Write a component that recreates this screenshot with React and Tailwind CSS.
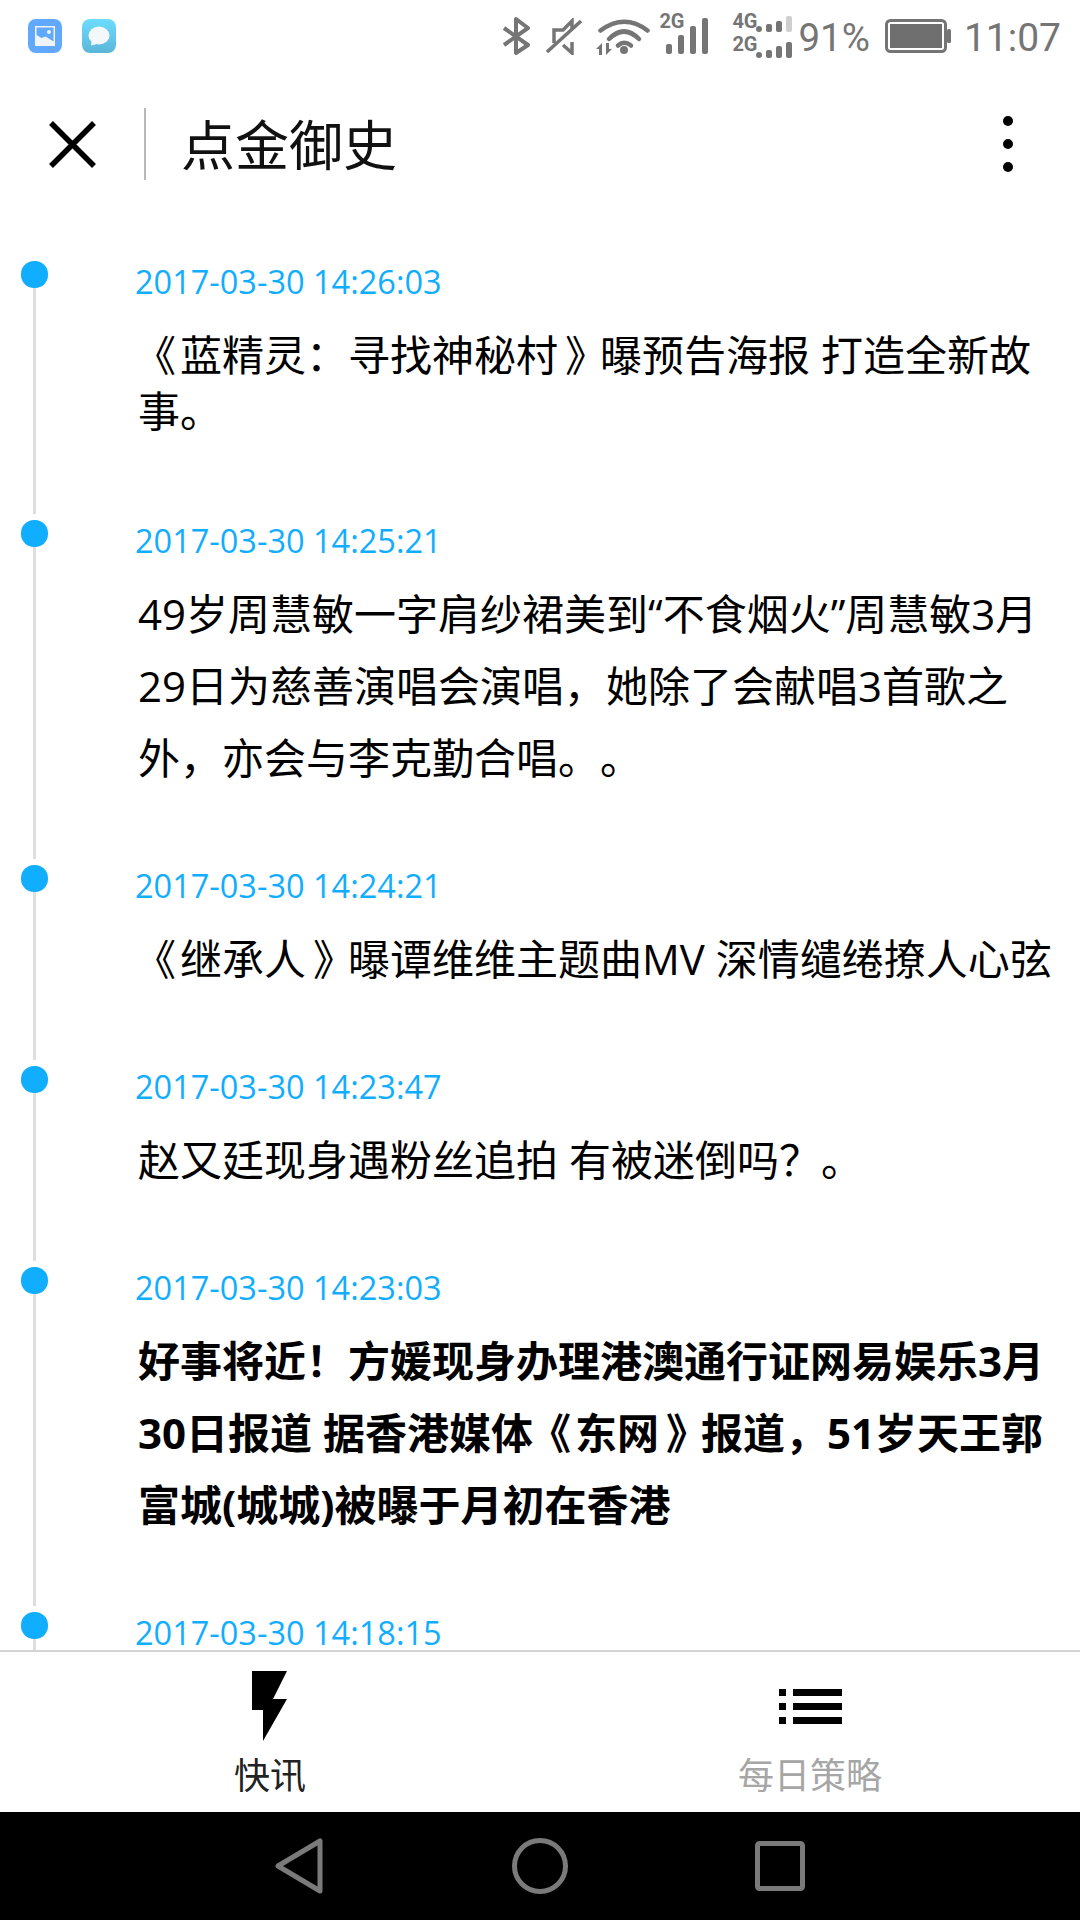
import React from 'react';

const news = [
  {
    time: '2017-03-30 14:26:03',
    text: '《蓝精灵：寻找神秘村》曝预告海报 打造全新故事。',
    body: 'mt-[25px] leading-[56px]',
    pad: 'pb-[81px]',
  },
  {
    time: '2017-03-30 14:25:21',
    text: '49岁周慧敏一字肩纱裙美到“不食烟火”周慧敏3月29日为慈善演唱会演唱，她除了会献唱3首歌之外，亦会与李克勤合唱。。',
    body: 'mt-[17px] leading-[72px]',
    pad: 'pb-[71px]',
  },
  {
    time: '2017-03-30 14:24:21',
    text: '《继承人》曝谭维维主题曲MV 深情缱绻撩人心弦',
    body: 'mt-[17px] leading-[72px]',
    pad: 'pb-[71px]',
  },
  {
    time: '2017-03-30 14:23:47',
    text: '赵又廷现身遇粉丝追拍 有被迷倒吗？。',
    body: 'mt-[17px] leading-[72px]',
    pad: 'pb-[71px]',
  },
  {
    time: '2017-03-30 14:23:03',
    text: '好事将近！方媛现身办理港澳通行证网易娱乐3月30日报道 据香港媒体《东网》报道，51岁天王郭富城(城城)被曝于月初在香港',
    body: 'mt-[17px] leading-[72px] font-bold',
    pad: 'pb-[71px]',
  },
  {
    time: '2017-03-30 14:18:15',
    text: '',
    body: '',
    pad: 'pb-[71px]',
  },
];

// 书名号 sit centred in their box in the screenshot, nudge them there
const withBrackets = (text) =>
  text.split(/([《》])/).map((part, i) => {
    if (part === '《') return <span key={i} className="relative -left-[4px]">{part}</span>;
    if (part === '》') return <span key={i} className="relative left-[7px]">{part}</span>;
    return part;
  });

const StatusBar = () => (
  <div className="flex h-[72px] shrink-0 items-center justify-between pl-[28px] pr-[19px] text-[#757575]">
    <div className="flex items-center gap-[20px]">
      <svg width="34" height="34" viewBox="0 0 34 34">
        <rect width="34" height="34" rx="8" fill="#60a9ff" />
        <rect x="7" y="7" width="20" height="20" fill="#f0f4f8" />
        <path d="M8.5 8.5h17v14l-8-5-4 1.5-5-3z" fill="#60a9ff" />
        <circle cx="21" cy="13" r="2" fill="#f0f4f8" />
      </svg>
      <svg width="34" height="34" viewBox="0 0 34 34">
        <defs>
          <linearGradient id="msg" x1="0" y1="0" x2="0" y2="1">
            <stop offset="0" stopColor="#6cdcff" />
            <stop offset="1" stopColor="#5bb6d8" />
          </linearGradient>
        </defs>
        <rect width="34" height="34" rx="8" fill="url(#msg)" />
        <ellipse cx="17" cy="16.5" rx="10.5" ry="9" fill="#f5f8fa" />
        <path d="M10 20l-1 6.500 8-2z" fill="#f5f8fa" />
      </svg>
    </div>
    <div className="flex items-center font-['Roboto',sans-serif]">
      <svg width="28" height="38" viewBox="0 0 28 38" fill="none" stroke="#757575" strokeWidth="4" strokeLinejoin="round">
        <path d="M2 11l24 17-12 8V2l12 9L2 28" />
      </svg>
      <svg className="ml-[16px]" width="36" height="37" viewBox="0 0 36 37" fill="none" stroke="#757575" strokeWidth="3.5">
        <path d="M1 34L35 3" />
        <path d="M8 25V12h9l9-9v8M26 24v11l-9-8" />
      </svg>
      <svg className="ml-[14px]" width="54" height="37" viewBox="0 0 54 37" fill="none" stroke="#757575" strokeWidth="4.5" strokeLinecap="round">
        <path d="M4.500 12.500Q28.500 -5 51.500 12.500" />
        <path d="M13 21Q28 6 43 21" />
        <path d="M22 27.500Q28 22 35 27.500" />
        <circle cx="28" cy="32" r="4" fill="#757575" stroke="none" />
        <path d="M6 25v12H3v-6H0zM10 37V25h3v6h3z" fill="#757575" stroke="none" />
      </svg>
      <div className="relative ml-[9px] h-[42px] w-[49px]">
        <span className="absolute left-0 top-[-4px] text-[20px] font-bold leading-[20px]">2G</span>
        <div className="absolute bottom-[3px] right-0 flex items-end gap-[6px]">
          <div className="h-[10px] w-[6px] rounded-[2px] bg-[#757575]" />
          <div className="h-[19px] w-[6px] rounded-[2px] bg-[#757575]" />
          <div className="h-[28px] w-[6px] rounded-[2px] bg-[#757575]" />
          <div className="h-[36px] w-[6px] rounded-[2px] bg-[#757575]" />
        </div>
      </div>
      <div className="relative ml-[24px] h-[46px] w-[60px] text-[20px] font-bold leading-[18px]">
        <span className="absolute left-0 top-[-1px]">4G</span>
        <span className="absolute left-0 top-[22px]">2G</span>
        <div className="absolute right-0 top-[3px] flex items-end gap-[4px]">
          <div className="h-[6px] w-[6px] rounded-full bg-[#757575]" />
          <div className="h-[8px] w-[6px] rounded-[2px] bg-[#757575]" />
          <div className="h-[11px] w-[6px] rounded-[2px] bg-[#757575]" />
          <div className="h-[16px] w-[6px] rounded-[2px] bg-[#cfcfcf]" />
        </div>
        <div className="absolute bottom-[1px] right-0 flex items-end gap-[4px]">
          <div className="h-[6px] w-[6px] rounded-full bg-[#757575]" />
          <div className="h-[8px] w-[6px] rounded-[2px] bg-[#757575]" />
          <div className="h-[12px] w-[6px] rounded-[2px] bg-[#757575]" />
          <div className="h-[16px] w-[6px] rounded-[2px] bg-[#757575]" />
        </div>
      </div>
      <span className="ml-[6px] mt-[4px] text-[38.500px] leading-none">91%</span>
      <svg className="ml-[15px]" width="66" height="34" viewBox="0 0 66 34">
        <rect x="1.500" y="1.500" width="59" height="31" rx="4" fill="none" stroke="#757575" strokeWidth="3" />
        <rect x="5" y="5" width="52" height="24" fill="#6f6f6f" />
        <rect x="62" y="10" width="4" height="14" rx="1.500" fill="#757575" />
      </svg>
      <span className="ml-[13px] mt-[4px] text-[39px] leading-none">11:07</span>
    </div>
  </div>
);

const Header = () => (
  <div className="relative flex h-[144px] shrink-0 items-center">
    <svg className="ml-[49px]" width="47" height="47" viewBox="0 0 47 47" stroke="#000" strokeWidth="5.500">
      <path d="M2 2l43 43M45 2L2 45" />
    </svg>
    <div className="ml-[48px] h-[72px] w-[2px] bg-[#b8b8b8]" />
    <h1 className="ml-[35px] mt-[2px] text-[54px] font-normal text-[#111]">点金御史</h1>
    <div className="absolute right-[67px] top-[44px] flex flex-col gap-[13px]">
      <div className="h-[10px] w-[10px] rounded-full bg-black" />
      <div className="h-[10px] w-[10px] rounded-full bg-black" />
      <div className="h-[10px] w-[10px] rounded-full bg-black" />
    </div>
  </div>
);

const NewsItem = ({ item }) => (
  <div className="flex">
    <div className="flex w-[135px] shrink-0 flex-col pb-[6px] pl-[21px]">
      <div className="h-[27px] w-[27px] shrink-0 rounded-[13px] bg-[#11adff]" />
      <div className="ml-[12px] w-[3px] flex-1 bg-[#dedede]" />
    </div>
    <div className={`flex-1 pr-[20px] ${item.pad}`}>
      <div className="pt-[1px] text-[32.500px] leading-[40px] text-[#11adff]">{item.time}</div>
      {item.text && <p className={`ml-[3px] text-[42px] text-black ${item.body}`}>{withBrackets(item.text)}</p>}
    </div>
  </div>
);

const TabBar = () => (
  <div className="grid h-[162px] shrink-0 grid-cols-2 border-t-2 border-[#d4d4d4] bg-white">
    <div className="flex flex-col items-center pt-[19px]">
      <svg className="-ml-[1px]" width="35" height="70" viewBox="0 0 35 70">
        <path d="M0 0h35L21 28h14L11 70V39H0z" fill="#000" />
      </svg>
      <span className="mt-[15px] text-[36px] leading-[40px] text-[#222]">快讯</span>
    </div>
    <div className="flex flex-col items-center pt-[37px]">
      <svg width="63" height="35" viewBox="0 0 63 35" fill="#000">
        <rect width="7" height="7" />
        <rect x="14" width="49" height="7" />
        <rect y="14" width="7" height="7" />
        <rect x="14" y="14" width="49" height="7" />
        <rect y="28" width="7" height="7" />
        <rect x="14" y="28" width="49" height="7" />
      </svg>
      <span className="mt-[32px] text-[36px] leading-[40px] text-[#a6a6a6]">每日策略</span>
    </div>
  </div>
);

const NavBar = () => (
  <div className="flex h-[108px] shrink-0 items-center justify-center gap-[188px] bg-black">
    <svg width="48" height="56" viewBox="0 0 48 56" fill="none" stroke="#7a7a7a" strokeWidth="5" strokeLinejoin="round">
      <path d="M45 3v50L3 28z" />
    </svg>
    <svg className="translate-x-[1px]" width="56" height="56" viewBox="0 0 56 56" fill="none" stroke="#7a7a7a" strokeWidth="5">
      <circle cx="28" cy="28" r="25.500" />
    </svg>
    <svg width="50" height="50" viewBox="0 0 50 50" fill="none" stroke="#7a7a7a" strokeWidth="5" strokeLinejoin="round">
      <rect x="2.500" y="2.500" width="45" height="45" rx="2" />
    </svg>
  </div>
);

export default function App() {
  return (
    <div className="flex h-[1920px] w-[1080px] flex-col overflow-hidden bg-white font-['Open_Sans','Noto_Sans_CJK_SC',sans-serif] [text-spacing-trim:space-all]">
      <StatusBar />
      <Header />
      <div className="min-h-0 flex-1 overflow-hidden pt-[45px]">
        {news.map((item) => (
          <NewsItem key={item.time} item={item} />
        ))}
      </div>
      <TabBar />
      <NavBar />
    </div>
  );
}
